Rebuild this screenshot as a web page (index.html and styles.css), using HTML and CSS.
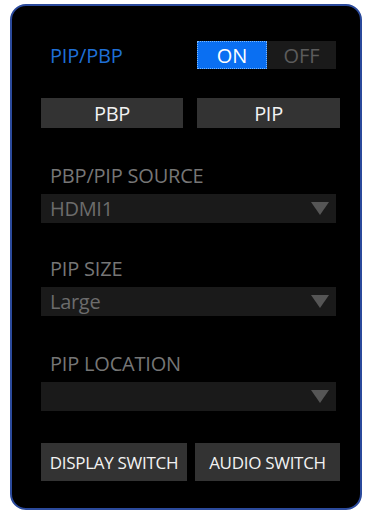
FILE: index.html
```html
<!DOCTYPE html>
<html lang="en">
<head>
    <meta charset="UTF-8">
    <meta name="viewport" content="width=device-width, initial-scale=1.0">
    <title>PIP/PBP Settings</title>
    <link rel="stylesheet" href="styles.css">
</head>
<body>
    <div class="panel">
        <div class="mode-row">
            <span class="mode-label">PIP/PBP</span>
            <div class="toggle">
                <span class="toggle-on">ON</span>
                <span class="toggle-off">OFF</span>
            </div>
        </div>
        <div class="button-row">
            <button class="btn">PBP</button>
            <button class="btn">PIP</button>
        </div>
        <div class="field source-field">
            <div class="field-label">PBP/PIP SOURCE</div>
            <div class="select">
                <span class="select-value">HDMI1</span>
                <span class="arrow"></span>
            </div>
        </div>
        <div class="field size-field">
            <div class="field-label">PIP SIZE</div>
            <div class="select">
                <span class="select-value">Large</span>
                <span class="arrow"></span>
            </div>
        </div>
        <div class="field location-field">
            <div class="field-label">PIP LOCATION</div>
            <div class="select">
                <span class="select-value"></span>
                <span class="arrow"></span>
            </div>
        </div>
        <div class="button-row bottom-row">
            <button class="btn btn-wide">DISPLAY SWITCH</button>
            <button class="btn btn-wide">AUDIO SWITCH</button>
        </div>
    </div>
</body>
</html>
```

FILE: styles.css
```css
body {
    margin: 0;
    background: #fff;
    font-family: 'Open Sans', 'Noto Sans', sans-serif;
}

.panel {
    box-sizing: border-box;
    width: 352px;
    height: 506px;
    margin: 4px 0 0 10px;
    padding: 35px 20px 0 29px;
    background: #000;
    border: 2px solid #2b4a9c;
    border-radius: 16px;
}

.mode-row {
    display: flex;
    justify-content: space-between;
    align-items: center;
    height: 28px;
    margin-right: 4px;
}

.mode-label {
    padding-left: 9px;
    color: #1f6fd6;
    font-size: 20px;
    letter-spacing: -0.2px;
}

.toggle {
    display: flex;
    width: 139px;
    height: 28px;
    background: #1a1a1a;
}

.toggle span {
    flex: 1;
    display: flex;
    justify-content: center;
    align-items: center;
    font-size: 20px;
}

.toggle-on {
    box-sizing: border-box;
    background: #0a6ff2;
    color: #fff;
    border: 1px dotted #7ab8ff;
    flex: 0 0 70px !important;
}

.toggle-off {
    color: #5c5c5c;
}

.button-row {
    display: flex;
    justify-content: space-between;
    margin-top: 29px;
}

.btn {
    width: 142px;
    height: 30px;
    padding: 0;
    border: none;
    background: #333;
    color: #f2f2f2;
    font-family: inherit;
    font-size: 20px;
    letter-spacing: -0.3px;
}

.btn:last-child {
    width: 143px;
}

.field {
    margin-right: 4px;
}

.source-field {
    margin-top: 36px;
}

.size-field {
    margin-top: 34px;
}

.location-field {
    margin-top: 36px;
}

.field-label {
    padding-left: 9px;
    color: #767676;
    font-size: 20px;
    line-height: 24px;
    letter-spacing: -0.2px;
}

.select {
    display: flex;
    justify-content: space-between;
    align-items: center;
    height: 29px;
    margin-top: 6px;
    padding: 0 7px 0 9px;
    background: #1a1a1a;
}

.select-value {
    color: #6c6c6c;
    font-size: 20px;
    letter-spacing: -0.3px;
}

.arrow {
    width: 0;
    height: 0;
    border-left: 9.5px solid transparent;
    border-right: 9.5px solid transparent;
    border-top: 13px solid #555;
}

.bottom-row {
    margin-top: 32px;
}

.btn-wide {
    width: 146px;
    height: 38px;
    font-size: 17px;
    letter-spacing: -0.3px;
}

.btn-wide:last-child {
    width: 145px;
}
```
